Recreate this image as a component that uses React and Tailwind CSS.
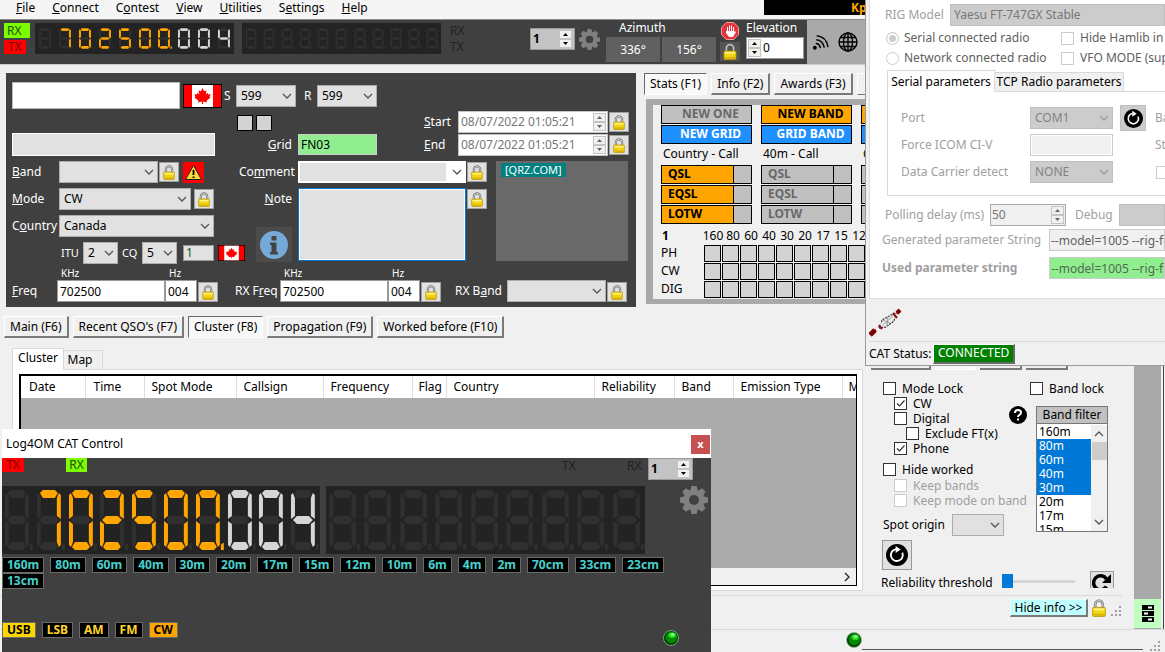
import clsx from 'clsx';

const SEGMENTS = {
  a: '6,7 9,4 21,4 24,7 21,12 9,12',
  b: '27,33 23,30 23,12 25,7 27,9',
  c: '27,35 27,59 25,61 23,56 23,38',
  d: '9,56 21,56 24,61 21,64 9,64 6,61',
  e: '3,35 7,38 7,56 5,61 3,59',
  f: '3,33 3,9 5,7 7,12 7,30',
  g: '5,34 9,30 21,30 25,34 21,38 9,38',
};

const LIT = { 0: 'abcdef', 2: 'abged', 4: 'fgbc', 5: 'afgcd', 7: 'abc', ' ': '' };

const DIGITS = [
  { char: ' ' },
  { char: '7', color: '#ffa500' },
  { char: '0', color: '#ffa500' },
  { char: '2', color: '#ffa500' },
  { char: '5', color: '#ffa500' },
  { char: '0', color: '#ffa500' },
  { char: '0', color: '#ffa500', dot: true },
  { char: '0', color: '#d6d6d6' },
  { char: '0', color: '#d6d6d6' },
  { char: '4', color: '#d6d6d6' },
];

const blanks = (count) => Array.from({ length: count }, () => ({ char: ' ' }));

const Display = ({ digits, small, className }) => (
  <div className={clsx('flex bg-[#232323]', small ? 'py-1' : '', className)}>
    {digits.map((digit, i) => (
      <svg
        key={i}
        className="h-full min-w-0 flex-1"
        viewBox={small ? '-5 0 40 68' : '0 0 32 68'}
        preserveAspectRatio="none"
      >
        {Object.keys(SEGMENTS).map((key) => (
          <polygon
            key={key}
            points={SEGMENTS[key]}
            fill={LIT[digit.char].includes(key) ? digit.color : '#303030'}
          />
        ))}
        <path d="M28 64v-5l2-2h1v7z" fill={digit.dot ? digit.color : '#303030'} />
      </svg>
    ))}
  </div>
);

const Gear = ({ className }) => (
  <svg className={className} viewBox="0 0 28 28">
    <g fill="#808080">
      {[0, 45, 90, 135].map((angle) => (
        <path key={angle} d="M11.5 0h5l1.2 5v18l-1.2 5h-5l-1.2-5V5z" transform={`rotate(${angle} 14 14)`} />
      ))}
      <circle cx="14" cy="14" r="10.5" />
    </g>
    <circle cx="14" cy="14" r="5" fill="#404040" />
  </svg>
);

const Lock = ({ className = 'h-[15px] w-3' }) => (
  <svg className={className} viewBox="0 0 14 18">
    <path d="M3.2 9V5.5a3.8 3.8 0 0 1 7.6 0V9" fill="none" stroke="#777" strokeWidth="2.6" />
    <path d="M3.2 9V5.5a3.8 3.8 0 0 1 7.6 0V9" fill="none" stroke="#c9c9c9" strokeWidth="1.2" />
    <rect x="0.6" y="8.4" width="12.8" height="9" rx="1" fill="#f2d411" stroke="#b08d00" strokeWidth="0.8" />
    <path d="M1.5 9.5h11v2h-11z" fill="#fff07a" />
    <path d="M1.5 15h11v1.6h-11z" fill="#d8ae08" />
  </svg>
);

const LockButton = () => (
  <button aria-label="Lock" className="flex h-5 w-5 shrink-0 items-center justify-center border border-[#a0a0a0] bg-[#e1e1e1]">
    <Lock />
  </button>
);

const Flag = ({ className }) => (
  <svg className={className} viewBox="0 0 39 24" preserveAspectRatio="none">
    <rect width="39" height="24" fill="#000" />
    <rect x="1" y="1" width="37" height="22" fill="#f00" />
    <rect x="9" y="1" width="21" height="22" fill="#fff" />
    <path
      transform="translate(11.5 4) scale(0.8)"
      fill="#f00"
      d="M10 0 12 4 15 3 14 8 16.500 6 17 8 20 7.500 19 11 20 12 15 16 15.500 18 10.700 17V20H9.300V17L4.500 18 5 16 0 12 1 11 0 7.500 3 8 3.500 6 6 8 5 3 8 4z"
    />
  </svg>
);

const Led = ({ className }) => (
  <svg className={className} viewBox="0 0 16 16">
    <circle cx="8" cy="8" r="7.5" fill="#003d00" stroke="#8fbf8f" strokeWidth="0.8" />
    <circle cx="8.400" cy="7.400" r="5.800" fill="#008a00" />
    <ellipse cx="9.200" cy="5.200" rx="3.600" ry="2.600" fill="#2fe22f" />
    <ellipse cx="9.600" cy="4.400" rx="1.600" ry="1" fill="#b9ffb9" />
  </svg>
);

const Reload = ({ className }) => (
  <svg className={className} viewBox="0 0 24 24">
    <circle cx="12" cy="12" r="12" fill="#000" />
    <path d="M17.800 9.500A6.500 6.500 0 1 1 11 5.600" fill="none" stroke="#fff" strokeWidth="2" />
    <path d="M10.500 2.200 16 6l-5.500 3.800z" fill="#fff" />
  </svg>
);

const Chevron = ({ className, color = '#555' }) => (
  <svg className={className} viewBox="0 0 10 6">
    <path d="M1 1l4 4 4-4" fill="none" stroke={color} strokeWidth="1.300" />
  </svg>
);

const Grip = () => (
  <svg className="h-3 w-3" viewBox="0 0 12 12" fill="#a0a0a0">
    <path d="M9 1h2v2H9zM5 5h2v2H5zM9 5h2v2H9zM1 9h2v2H1zM5 9h2v2H5zM9 9h2v2H9z" />
  </svg>
);

const Combo = ({ id, label, value, className, disabled }) => (
  <div className={clsx('relative h-[22px] shrink-0', className)}>
    <select
      id={id}
      aria-label={label}
      disabled={disabled}
      className={clsx(
        'block h-full w-full appearance-none border pl-1 pr-3',
        disabled ? 'border-[#bfbfbf] bg-[#ccc] text-[#838383]' : 'border-[#adadad] bg-[#e1e1e1] text-black'
      )}
    >
      <option>{value}</option>
    </select>
    <Chevron
      color={disabled ? '#999' : '#555'}
      className="pointer-events-none absolute right-1 top-2 h-1.5 w-2.5"
    />
  </div>
);

const Arrows = ({ dim }) => (
  <span className="flex w-[15px] flex-col justify-between p-px">
    {['Up', 'Down'].map((dir) => (
      <button
        key={dir}
        type="button"
        aria-label={dir}
        className={clsx(
          'flex h-[9px] items-center justify-center border border-[#c4c4c4] bg-[#f0f0f0]',
          dim ? 'text-[#666]' : 'text-black'
        )}
      >
        <svg className="h-[3px] w-[5px]" viewBox="0 0 5 3" fill="currentColor">
          <path d={dir === 'Up' ? 'M0 3h5L2.500 0z' : 'M0 0h5L2.500 3z'} />
        </svg>
      </button>
    ))}
  </span>
);

const RadioNumber = () => (
  <div className="flex h-[22px] w-[45px] border border-[#999] bg-[#c3c3c3]">
    <input aria-label="Radio" defaultValue="1" className="w-[27px] bg-transparent pl-0.5 font-bold text-black" />
    <Arrows />
  </div>
);

const DateBox = ({ id, children }) => (
  <div className="flex items-center pr-px">
    <label htmlFor={id} className="w-[34px]">{children}</label>
    <div className="mr-px flex h-[22px] w-[150px] items-center justify-between border border-[#c4c4c4] bg-white">
      <input id={id} defaultValue="08/07/2022 01:05:21" className="w-[130px] bg-transparent pl-0.5 text-[#777]" />
      <Arrows dim />
    </div>
    <LockButton />
  </div>
);

const FreqGroup = ({ id, children }) => (
  <div className="flex items-end">
    <label htmlFor={id} className="flex h-[22px] w-[45px] shrink-0 items-center whitespace-nowrap">{children}</label>
    <div>
      <span className="block h-[13px] pl-1 text-[10px] leading-3">KHz</span>
      <input id={id} defaultValue="702500" className="block h-[22px] w-[108px] border border-[#999] bg-white pl-0.5 text-black" />
    </div>
    <div className="mr-px">
      <span className="block h-[13px] pl-1 text-[10px] leading-3">Hz</span>
      <input aria-label="Hz" defaultValue="004" className="block h-[22px] w-8 border border-[#999] bg-white pl-0.5 text-black" />
    </div>
    <LockButton />
  </div>
);

const Check = ({ children, checked, disabled, className }) => (
  <label className={clsx('flex h-[15px] items-center gap-1.5 whitespace-nowrap', className)}>
    <span className="relative block h-[13px] w-[13px] shrink-0">
      <input
        type="checkbox"
        defaultChecked={checked}
        disabled={disabled}
        className={clsx('block h-[13px] w-[13px] appearance-none border bg-white', disabled ? 'border-[#ccc]' : 'border-[#333]')}
      />
      {checked && (
        <svg className="pointer-events-none absolute inset-0 h-[13px] w-[13px]" viewBox="0 0 13 13">
          <path d="M3 6.500 5.500 9 10.500 3.500" fill="none" stroke="#333" strokeWidth="1.200" />
        </svg>
      )}
    </span>
    {children}
  </label>
);

const PushButton = ({ children, active }) => (
  <button
    className={clsx(
      'h-[22px] whitespace-nowrap border px-[5px]',
      active
        ? 'border-b-white border-l-[#696969] border-r-white border-t-[#696969] bg-[#f8f8f8]'
        : 'border-b-2 border-r-2 border-b-[#7a7a7a] border-l-white border-r-[#7a7a7a] border-t-white bg-[#f0f0f0]'
    )}
  >
    {children}
  </button>
);

const MenuBar = () => (
  <nav className="flex h-[19px] bg-[#f5f5f5]">
    <div className="flex items-start gap-[17px] pl-4 leading-[15px]">
      <a href="#file"><u>F</u>ile</a>
      <a href="#connect"><u>C</u>onnect</a>
      <a href="#contest">C<u>o</u>ntest</a>
      <a href="#view"><u>V</u>iew</a>
      <a href="#utilities"><u>U</u>tilities</a>
      <a href="#settings">S<u>e</u>ttings</a>
      <a href="#help"><u>H</u>elp</a>
    </div>
    <div className="ml-auto h-[15px] w-[401px] bg-black pl-[87px] font-bold leading-[15px] text-[#ffa500]">Kp</div>
  </nav>
);

const Toolbar = () => (
  <div className="flex h-[46px] border-b border-t border-b-[#ccc] border-t-[#8c8c8c] bg-[#404040] pl-1 text-white">
    <div className="w-[31px] pt-[3px]">
      <div className="h-[15px] w-[26px] bg-[#7cfc00] pl-[3px] leading-[15px] text-[#235000]">RX</div>
      <div className="mt-0.5 h-[14px] w-[22px] bg-[#f00] pl-1 leading-[14px] text-[#7a0000]">TX</div>
    </div>
    <Display small digits={DIGITS} className="mt-[3px] h-[31px] w-[199px]" />
    <Display small digits={blanks(11)} className="ml-2 mt-[3px] h-[31px] w-[199px]" />
    <div className="w-[89px] pl-[9px] pt-[3px] text-[#222]">
      <div>RX</div>
      <div>TX</div>
    </div>
    <div className="pt-2"><RadioNumber /></div>
    <Gear className="ml-1 mt-[9px] h-[21px] w-[21px]" />
    <div className="ml-1.5 w-[110px]">
      <div className="pl-[13px]">Azimuth</div>
      <div className="mt-px flex gap-0.5 text-center leading-[25px]">
        <div className="h-[25px] flex-1 bg-[#606060]">336°</div>
        <div className="h-[25px] flex-1 bg-[#606060]">156°</div>
      </div>
    </div>
    <div className="ml-1 flex w-5 flex-col items-center gap-0.5 pt-0.5">
      <svg className="h-[18px] w-[18px]" viewBox="0 0 18 18">
        <path d="M5.300 0.500h7.400l4.800 4.800v7.400l-4.800 4.800H5.300L0.500 12.700V5.300z" fill="#e2343a" stroke="#f3a0a0" />
        <path d="M5 6v5l3 4h4l3-5-1-1-1 1V5h-1v4h-1V3.500h-1V9H9V3.500H8V9H7V5H6v4H5z" fill="#fff" />
      </svg>
      <button aria-label="Lock rotator" className="flex h-[19px] w-5 items-center justify-center bg-[#555]">
        <Lock className="h-[17px] w-[14px]" />
      </button>
    </div>
    <div className="w-[67px] pl-1.5">
      <label htmlFor="elevation" className="block h-[17px]">Elevation</label>
      <div className="flex h-[22px] w-[58px] border border-[#999] bg-white">
        <Arrows />
        <input id="elevation" defaultValue="0" className="w-10 pl-px text-black" />
      </div>
    </div>
    <div className="flex flex-1 items-center gap-[9px] bg-[#a9a9a9] pl-[5px]">
      <svg className="h-[18px] w-[17px]" viewBox="0 0 18 18" fill="none" stroke="#000" strokeWidth="1.600">
        <circle cx="3" cy="15" r="1.300" fill="#000" />
        <path d="M4 10.500q4 0 5 5M4.500 6.500q7 0.500 8.500 8.500M5 2.500q10.500 1 12 12" />
      </svg>
      <svg className="h-5 w-5" viewBox="0 0 20 20" fill="none" stroke="#000" strokeWidth="1.400">
        <circle cx="10" cy="10" r="9" />
        <ellipse cx="10" cy="10" rx="4.500" ry="9" />
        <path d="M10 1v18M1 10h18M2.500 5.500h15M2.500 14.500h15" />
      </svg>
    </div>
  </div>
);

const EntryPanel = () => (
  <form className="w-[630px] shrink-0 bg-[#404040] px-1.5 pt-[9px] text-white">
    <div className="flex h-[74px] justify-between">
      <div className="w-[365px]">
        <div className="flex h-[27px] items-center">
          <input aria-label="Callsign" className="h-[27px] w-[168px] border border-[#bbb] bg-white px-1 text-black" />
          <Flag className="ml-[3px] h-6 w-[39px]" />
          <label htmlFor="rst-sent" className="w-[14px] pl-0.5">S</label>
          <Combo id="rst-sent" value="599" className="w-[60px]" />
          <label htmlFor="rst-rcvd" className="ml-2 w-[13px]">R</label>
          <Combo id="rst-rcvd" value="599" className="w-[60px]" />
        </div>
        <div className="mt-1.5 flex h-4 gap-[3px] pl-[225px]">
          <span className="h-4 w-4 border border-black bg-[#d3d3d3]" />
          <span className="h-4 w-4 border border-black bg-[#d3d3d3]" />
        </div>
        <div className="mt-0.5 flex items-center">
          <input aria-label="Name" className="h-[23px] w-[203px] border border-white bg-[#e1e1e1] px-1 text-black" />
          <label htmlFor="grid" className="w-20 pr-[3px] text-right"><u>G</u>rid</label>
          <input id="grid" defaultValue="FN03" className="ml-auto h-[21px] w-[79px] border border-[#ccc] bg-[#90ee90] pl-0.5 text-black" />
        </div>
      </div>
      <div className="flex flex-col justify-end gap-px">
        <DateBox id="start"><u>S</u>tart</DateBox>
        <DateBox id="end"><u>E</u>nd</DateBox>
      </div>
    </div>

    <div className="mt-[5px] flex h-[101px]">
      <div className="flex w-[227px] flex-col gap-[5px]">
        <div className="flex items-center">
          <label htmlFor="band" className="w-[47px]"><u>B</u>and</label>
          <Combo id="band" value="" className="mr-px w-[99px]" />
          <LockButton />
          <svg className="ml-1 h-[21px] w-[21px]" viewBox="0 0 21 21">
            <rect width="21" height="21" fill="#f00" />
            <path d="M10.500 3.500 18.500 17.500H2.500z" fill="#ffd83a" stroke="#222" />
            <path d="M10.500 8v5M10.500 14.500v1.500" stroke="#000" strokeWidth="1.800" />
          </svg>
        </div>
        <div className="flex items-center">
          <label htmlFor="mode" className="w-[47px]"><u>M</u>ode</label>
          <Combo id="mode" value="CW" className="mr-[3px] w-[132px]" />
          <LockButton />
        </div>
        <div className="flex items-center">
          <label htmlFor="country" className="w-[47px]">C<u>o</u>untry</label>
          <Combo id="country" value="Canada" className="w-[155px]" />
        </div>
        <div className="flex items-center whitespace-nowrap pl-[49px]">
          <label htmlFor="itu" className="w-[22px] shrink-0 text-[11px]">ITU</label>
          <Combo id="itu" value="2" className="w-[35px]" />
          <label htmlFor="cq" className="w-6 shrink-0 pl-1 text-[11px]">CQ</label>
          <Combo id="cq" value="5" className="w-[35px]" />
          <input aria-label="Continent" defaultValue="1" className="ml-1.5 h-4 w-[31px] shrink-0 border border-[#999] bg-[#e1e1e1] pl-0.5 text-[#0a640a]" />
          <Flag className="ml-1 h-4 w-[27px] shrink-0" />
        </div>
      </div>
      <div className="flex w-[59px] flex-col pr-1.5 text-right">
        <label htmlFor="comment" className="h-[27px] leading-[22px]">Co<u>m</u>ment</label>
        <label htmlFor="note" className="h-[39px] leading-[22px]"><u>N</u>ote</label>
        <button type="button" aria-label="Info" className="flex h-[35px] w-9 shrink-0 items-center justify-center self-end bg-[#4b4b4b]">
          <svg className="h-7 w-7" viewBox="0 0 28 28">
            <circle cx="14" cy="14" r="14" fill="#75aad8" />
            <path d="M11.500 5h5v4.500h-5zM10 11.500h6.500V21H18v2.500h-8V21h1.500v-7H10z" fill="#444" />
          </svg>
        </button>
      </div>
      <div className="w-[168px]">
        <div className="relative h-[22px]">
          <input id="comment" className="block h-full w-full border-2 border-r-[20px] border-white bg-[#e1e1e1] px-1 text-black" />
          <Chevron className="absolute right-1 top-2 h-1.5 w-2.5" />
        </div>
        <textarea id="note" className="mt-[5px] block h-[73px] w-full resize-none border border-[#0078d7] bg-[#e1e1e1] p-1 text-black outline outline-1 -outline-offset-2 outline-white" />
      </div>
      <div className="flex w-[30px] flex-col gap-[7px] pl-px pt-px">
        <LockButton />
        <LockButton />
      </div>
      <div className="h-[100px] w-[132px] bg-[#696969] px-[5px] pt-px text-[11px]">
        <span className="inline-block h-[14px] bg-[#008080] px-1 leading-[14px]">[QRZ.COM]</span>
      </div>
    </div>

    <div className="mt-[5px] flex items-end">
      <FreqGroup id="freq"><span><u>F</u>req</span></FreqGroup>
      <div className="ml-[17px]"><FreqGroup id="rx-freq"><span>RX F<u>r</u>eq</span></FreqGroup></div>
      <label htmlFor="rx-band" className="ml-[14px] flex h-[22px] w-[52px] shrink-0 items-center whitespace-nowrap"><span>RX B<u>a</u>nd</span></label>
      <Combo id="rx-band" value="" className="mr-px w-[99px]" />
      <LockButton />
    </div>
  </form>
);

const StatColumn = ({ first, firstClass, second, title, names = ['QSL', 'EQSL', 'LOTW'], qslClass }) => (
  <div className="w-[91px] shrink-0 font-bold">
    <div className={clsx('h-[19px] border border-black pl-2 text-center leading-4', firstClass)}>{first}</div>
    <div className="mt-px h-[19px] border border-black bg-[#1e90ff] pl-2 text-center leading-4 text-white">{second}</div>
    <div className="h-[21px] whitespace-nowrap pl-0.5 pt-0.5 font-normal">{title}</div>
    {names.map((name, i) => (
      <div key={i} className="mb-px flex h-[19px] border border-black bg-[#c0c0c0] leading-4">
        <span className={clsx('w-[72px] border-r border-black pl-1.5', qslClass)}>{name}</span>
      </div>
    ))}
  </div>
);

const STAT_BANDS = ['160', '80', '60', '40', '30', '20', '17', '15', '12'];

const StatsPanel = () => (
  <div className="min-w-0 flex-1 overflow-hidden pl-2">
    <div className="flex gap-1">
      <PushButton active>Stats (F1)</PushButton>
      <PushButton>Info (F2)</PushButton>
      <PushButton>Awards (F3)</PushButton>
      <button aria-label="More" className="h-[22px] w-16 border border-white border-b-[#7a7a7a]" />
    </div>
    <div className="ml-0.5 mt-1 h-[205px] border-b-[5px] border-l-[7px] border-t-[6px] border-[#a9a9a9] pl-2">
      <div className="flex gap-[9px]">
        <StatColumn first="NEW ONE" firstClass="bg-[#c0c0c0] text-[#696969]" second="NEW GRID" title="Country - Call" qslClass="bg-[#ffa500]" />
        <StatColumn first="NEW BAND" firstClass="bg-[#ffa500]" second="GRID BAND" title="40m - Call" qslClass="text-[#696969]" />
        <StatColumn firstClass="bg-[#ffa500]" title="C" names={['', '', '']} />
      </div>
      <table className="mt-0.5 border-separate border-spacing-0">
        <thead>
          <tr className="h-[17px]">
            <th className="w-[43px] pl-px text-left">1</th>
            {STAT_BANDS.map((band, i) => (
              <th key={band} className="w-[18px] max-w-[18px] p-0 font-normal">
                <span className={clsx('flex justify-center', i > 0 && 'pl-1')}>{band}</span>
              </th>
            ))}
          </tr>
        </thead>
        <tbody>
          {['PH', 'CW', 'DIG'].map((mode) => (
            <tr key={mode} className="h-[18px]">
              <th className="p-0 text-left font-normal leading-4">{mode}</th>
              {STAT_BANDS.map((band) => (
                <td key={band} className="p-0">
                  <span className="block h-[17px] w-[17px] border border-black bg-[#d3d3d3]" />
                </td>
              ))}
            </tr>
          ))}
        </tbody>
      </table>
    </div>
  </div>
);

const ClusterPanel = () => (
  <div className="flex min-w-0 flex-1 flex-col">
    <div className="flex gap-1 pl-1">
      <PushButton>Main (F6)</PushButton>
      <PushButton>Recent QSO's (F7)</PushButton>
      <PushButton active>Cluster (F8)</PushButton>
      <PushButton>Propagation (F9)</PushButton>
      <PushButton>Worked before (F10)</PushButton>
    </div>
    <div className="mt-[10px] flex items-end pl-3">
      <button className="relative z-10 -mb-px h-[22px] w-[52px] border border-b-0 border-[#d9d9d9] bg-white pb-1">Cluster</button>
      <button className="h-[19px] w-[39px] border border-b-0 border-l-0 border-[#d9d9d9] bg-[#f0f0f0] pr-1.5">Map</button>
    </div>
    <div className="mb-1 ml-3 mr-[3px] flex min-h-0 flex-1 border border-[#d9d9d9] bg-white px-[5px] py-1">
      <div className="ml-px flex min-w-0 flex-1 flex-col overflow-hidden border-2 border-b border-r border-black bg-[#ababab]">
        <table className="w-full table-fixed">
          <thead>
            <tr className="h-[22px] bg-white text-left">
              <th className="w-[64px] border-r border-[#ddd] pl-2 font-normal">Date</th>
              <th className="w-[59px] border-r border-[#ddd] pl-2 font-normal">Time</th>
              <th className="w-[92px] border-r border-[#ddd] pl-[7px] font-normal">Spot Mode</th>
              <th className="w-[87px] border-r border-[#ddd] pl-[7px] font-normal">Callsign</th>
              <th className="w-[89px] border-r border-[#ddd] pl-[7px] font-normal">Frequency</th>
              <th className="w-[34px] border-r border-[#ddd] pl-[6px] font-normal">Flag</th>
              <th className="w-[148px] border-r border-[#ddd] pl-[7px] font-normal">Country</th>
              <th className="w-[80px] border-r border-[#ddd] pl-[7px] font-normal">Reliability</th>
              <th className="w-[59px] border-r border-[#ddd] pl-[7px] font-normal">Band</th>
              <th className="w-[109px] whitespace-nowrap border-r border-[#ddd] pl-[7px] font-normal">Emission Type</th>
              <th className="overflow-hidden pl-[6px] font-normal">M</th>
            </tr>
          </thead>
        </table>
        <div className="mt-auto flex h-[17px] items-center justify-end bg-[#f0f0f0] pr-1">
          <Chevron className="h-1.5 w-2.5 -rotate-90" color="#222" />
        </div>
      </div>
    </div>
  </div>
);

const FILTER_BANDS = ['160m', '80m', '60m', '40m', '30m', '20m', '17m', '15m'];
const SELECTED = ['80m', '60m', '40m', '30m'];

const FilterPanel = () => (
  <div className="flex w-[268px] shrink-0 flex-col overflow-hidden pb-[7px] pl-[5px] pt-8">
    <div className="flex gap-1">
      <button aria-label="Spots" className="h-[22px] w-[60px] border-b-2 border-r-2 border-[#7a7a7a]" />
      <button aria-label="Filters" className="h-[22px] w-[41px] border border-white bg-[#f8f8f8]" />
      <button aria-label="Alerts" className="h-[22px] w-[42px] border-b-2 border-r-2 border-[#7a7a7a]" />
      <button aria-label="Options" className="h-[22px] w-[42px] border-b-2 border-r-2 border-[#7a7a7a]" />
    </div>
    <div className="mt-[11px] flex pl-3">
      <div className="w-[126px]">
        <Check>Mode Lock</Check>
        <Check checked className="pl-[11px]">CW</Check>
        <Check className="pl-[11px]">Digital</Check>
        <Check className="pl-[23px]">Exclude FT(x)</Check>
        <Check checked className="pl-[11px]">Phone</Check>
        <Check className="mt-1.5">Hide worked</Check>
        <Check disabled className="mt-px pl-[11px] text-[#a0a0a0]">Keep bands</Check>
        <Check disabled className="pl-[11px] text-[#a0a0a0]">Keep mode on band</Check>
      </div>
      <svg className="mt-[25px] h-[18px] w-[18px]" viewBox="0 0 18 18">
        <circle cx="9" cy="9" r="9" fill="#000" />
        <path d="M6 7q0-3 3-3t3 2.500q0 1.500-1.500 2.300T9 11M9 12.500v2" fill="none" stroke="#fff" strokeWidth="2" />
      </svg>
      <div className="ml-[3px]">
        <Check>Band lock</Check>
        <div className="ml-1.5 mt-[10px] w-[72px]">
          <div className="h-[18px] border border-[#777] bg-[#c0c0c0] text-center leading-4">Band filter</div>
          <div className="flex h-[108px] overflow-hidden border border-t-0 border-[#777] bg-white pt-px">
            <ul role="listbox" aria-label="Band filter" className="w-[54px]">
              {FILTER_BANDS.map((band) => (
                <li
                  key={band}
                  role="option"
                  aria-selected={SELECTED.includes(band)}
                  className={clsx('h-[14px] pl-0.5 leading-[14px]', SELECTED.includes(band) && 'bg-[#0078d7] text-white')}
                >
                  {band}
                </li>
              ))}
            </ul>
            <div className="flex flex-1 flex-col items-center bg-[#f0f0f0] py-1.5">
              <Chevron className="h-1.5 w-2.5 rotate-180" />
              <span className="mt-[5px] h-[18px] w-[15px] bg-[#cdcdcd]" />
              <Chevron className="mt-auto h-1.5 w-2.5" />
            </div>
          </div>
        </div>
      </div>
    </div>
    <div className="-mt-[18px] flex items-center pl-3">
      <label htmlFor="origin" className="w-[69px] whitespace-nowrap">Spot origin</label>
      <Combo id="origin" value="" className="w-[52px]" />
    </div>
    <button aria-label="Refresh" className="ml-[11px] mt-1 flex h-[30px] w-[30px] shrink-0 items-center justify-center border border-[#999] bg-[#e1e1e1]">
      <Reload className="h-[22px] w-[22px]" />
    </button>
    <div className="mt-px flex h-[17px] shrink-0 overflow-hidden pl-[10px]">
      <label htmlFor="reliability" className="w-[121px] whitespace-nowrap pt-1">Reliability threshold</label>
      <input
        id="reliability"
        type="range"
        defaultValue="0"
        className="mt-[3px] h-[14px] w-[73px] appearance-none bg-[linear-gradient(#d6d6d6,#d6d6d6)] bg-[length:100%_3px] bg-center bg-no-repeat [&::-webkit-slider-thumb]:h-[14px] [&::-webkit-slider-thumb]:w-[11px] [&::-webkit-slider-thumb]:appearance-none [&::-webkit-slider-thumb]:bg-[#0078d7]"
      />
      <button aria-label="Reset" className="ml-[15px] flex h-6 w-6 items-center justify-center border border-[#999] bg-[#e1e1e1]">
        <svg className="h-[22px] w-5" viewBox="0 0 20 22">
          <path d="M14.500 14.500A7 7 0 1 1 14.500 7" fill="none" stroke="#000" strokeWidth="3.500" />
          <path d="M19 2v9h-9z" fill="#000" />
        </svg>
      </button>
    </div>
  </div>
);

const CatWindow = () => (
  <section className="absolute bottom-0 left-0.5 h-[223px] w-[709px] bg-[#404040]">
    <header className="flex h-[29px] items-center justify-between bg-white pl-1">
      <h2>Log4OM CAT Control</h2>
      <button aria-label="Close" className="mr-px mt-px h-[19px] w-[19px] bg-[#c75050] text-[11px] font-bold leading-4 text-white">x</button>
    </header>
    <div className="flex h-7 leading-[14px] text-[#222]">
      <div className="h-[14px] w-[22px] bg-[#f00] text-center text-[#7a0000]">TX</div>
      <div className="ml-[42px] h-[14px] w-[21px] bg-[#7cfc00] text-center text-[#235000]">RX</div>
      <div className="ml-auto w-[65px] pt-px">TX</div>
      <div className="w-[21px] pt-px">RX</div>
      <div className="mr-[18px]"><RadioNumber /></div>
    </div>
    <div className="flex">
      <Display digits={DIGITS} className="h-[68px] w-[318px]" />
      <Display digits={blanks(9)} className="ml-1.5 h-[68px] w-[319px]" />
      <Gear className="ml-auto mr-[3px] h-7 w-7" />
    </div>
    <div className="mt-[3px] flex h-8 flex-wrap gap-x-1.5 pr-8 font-bold text-[#48d1cc]">
      {['160m', '80m', '60m', '40m', '30m', '20m', '17m', '15m', '12m', '10m', '6m', '4m', '2m', '70cm', '33cm', '23cm', '13cm'].map((band) => (
        <button key={band} className="h-4 border border-[#696969] bg-black px-1 leading-[14px]">{band}</button>
      ))}
    </div>
    <div className="mt-[33px] flex gap-1.5 font-bold">
      {['USB', 'LSB', 'AM', 'FM', 'CW'].map((mode) => (
        <button
          key={mode}
          className={clsx(
            'h-4 border border-[#696969] px-1 leading-[14px]',
            mode === 'USB' && 'bg-[#ffd700] text-black',
            mode === 'CW' && 'bg-[#ffa500] text-black',
            mode !== 'USB' && mode !== 'CW' && 'bg-black text-[#ffd42a]'
          )}
        >
          {mode}
        </button>
      ))}
      <Led className="ml-auto mr-8 mt-2 h-4 w-4" />
    </div>
  </section>
);

const RigWindow = () => (
  <section className="absolute right-0 top-0 h-[366px] w-[300px] overflow-hidden border-b border-l border-[#9a9a9a] bg-[#f0f0f0] pl-[3px]">
    <div className="h-[299px] overflow-hidden border-b border-l border-[#dcdcdc] bg-white pt-1 text-[#a0a0a0]">
      <div className="flex items-center pl-[15px]">
        <label htmlFor="rig" className="w-[65px] whitespace-nowrap">RIG Model</label>
        <select id="rig" disabled className="h-[22px] flex-1 appearance-none border border-[#bfbfbf] bg-[#ccc] pl-[3px] text-[#777]">
          <option>Yaesu FT-747GX Stable</option>
        </select>
      </div>
      <div className="mt-0.5 grid grid-cols-[175px_1fr] pl-4 leading-5 text-[#606060]">
        {[
          ['Serial connected radio', 'Hide Hamlib in t'],
          ['Network connected radio', 'VFO MODE (sup'],
        ].map(([radio, check], i) => (
          <div key={radio} className="contents">
            <label className="flex h-5 items-center gap-[5px] whitespace-nowrap">
              <input
                type="radio"
                name="connection"
                defaultChecked={i === 0}
                className="h-[13px] w-[13px] appearance-none rounded-full border border-[#ccc] bg-white checked:bg-[#ccc] checked:shadow-[inset_0_0_0_2px_white]"
              />
              {radio}
            </label>
            <Check disabled className="self-center">{check}</Check>
          </div>
        ))}
      </div>
      <div className="mt-[2px] flex items-end pl-[17px] text-black">
        <button className="relative z-10 -mb-px h-[22px] w-[108px] whitespace-nowrap border border-b-0 border-[#d9d9d9] bg-white">Serial parameters</button>
        <button className="h-[19px] w-[129px] whitespace-nowrap border border-b-0 border-l-0 border-[#d9d9d9] bg-[#f0f0f0] leading-4">TCP Radio parameters</button>
      </div>
      <div className="ml-[17px] flex h-[105px] flex-col gap-[5px] whitespace-nowrap border border-r-0 border-[#d9d9d9] pl-[13px] pt-[15px]">
        <div className="flex h-[22px] items-center">
          <label htmlFor="port" className="w-[129px] shrink-0">Port</label>
          <Combo id="port" disabled value="COM1" className="w-[83px]" />
          <button aria-label="Reload ports" className="ml-[7px] flex h-[26px] w-[26px] shrink-0 items-center justify-center border border-[#bfbfbf] bg-[#ccc]">
            <Reload className="h-[19px] w-[19px]" />
          </button>
          <span className="ml-[9px]">Ba</span>
        </div>
        <div className="flex h-[22px] items-center">
          <label htmlFor="civ" className="w-[129px] shrink-0">Force ICOM CI-V</label>
          <input id="civ" disabled className="h-[22px] w-[83px] shrink-0 border border-[#ccc] bg-[#f0f0f0] outline outline-1 -outline-offset-2 outline-white" />
          <span className="ml-[42px]">St</span>
        </div>
        <div className="flex h-[22px] items-center">
          <label htmlFor="carrier" className="w-[129px] shrink-0">Data Carrier detect</label>
          <Combo id="carrier" disabled value="NONE" className="w-[83px]" />
          <Check disabled className="ml-[43px]" />
        </div>
      </div>
      <div className="mt-2 flex items-center pl-[15px]">
        <label htmlFor="polling" className="w-[105px] whitespace-nowrap">Polling delay (ms)</label>
        <div className="flex h-[22px] w-[76px] justify-between border border-[#aaa] bg-[#f0f0f0]">
          <input id="polling" disabled defaultValue="50" className="w-14 bg-transparent pl-px text-[#777]" />
          <Arrows dim />
        </div>
        <label htmlFor="debug" className="w-[53px] pl-[9px]">Debug</label>
        <input id="debug" disabled className="h-[22px] min-w-0 flex-1 border border-[#bfbfbf] bg-[#ccc]" />
      </div>
      <div className="mt-[3px] flex items-center pl-3">
        <label htmlFor="generated" className="w-[167px] shrink-0 whitespace-nowrap">Generated parameter String</label>
        <input id="generated" readOnly value="--model=1005 --rig-fi" className="h-[22px] min-w-0 flex-1 border border-[#ccc] bg-[#f0f0f0] pl-px text-[#606060]" />
      </div>
      <div className="mt-1.5 flex items-center pl-3">
        <label htmlFor="used" className="w-[167px] shrink-0 whitespace-nowrap font-bold">Used parameter string</label>
        <input id="used" readOnly value="--model=1005 --rig-fi" className="h-[22px] min-w-0 flex-1 border border-[#ccc] bg-[#90ee90] pl-px text-[#506a50]" />
      </div>
    </div>
    <div className="h-[43px] border-b border-[#d9d9d9] pt-[9px]">
      <svg className="h-[30px] w-[34px]" viewBox="0 0 34 30">
        <path d="M2 26 31 3" stroke="#8b1a1a" strokeWidth="2.500" />
        <path d="M11 20 13 12 22 7 27 5 25 13 17 19z" fill="#ececec" stroke="#333" strokeWidth="1.200" strokeDasharray="2 1" />
        <path d="M13 18 25 7M14 12l7 3M19 8l-1 10" stroke="#999" strokeWidth="1" />
        <path d="M7 22l3-2M11 18l2-2M25 9l3-3" stroke="#fff" strokeWidth="3" />
        <path d="M10 17l3 4M24 5l4 5" stroke="#8b1a1a" strokeWidth="2.200" />
        <path d="M1 27 6 22" stroke="#7b0000" strokeWidth="5" />
        <path d="M28 5l3-3" stroke="#7b0000" strokeWidth="4" />
      </svg>
    </div>
    <div className="flex h-6 items-center">
      <span className="w-[64px] whitespace-nowrap">CAT Status:</span>
      <span className="h-5 border border-b-2 border-r-2 border-b-[#696969] border-l-white border-r-[#696969] border-t-white bg-[#008000] px-1 text-white">CONNECTED</span>
    </div>
  </section>
);

export default function App() {
  return (
    <div className="relative flex h-screen flex-col overflow-hidden bg-[#f0f0f0] font-['Noto_Sans',sans-serif] text-[12px] leading-4 text-black">
      <MenuBar />
      <Toolbar />
      <div className="mt-2 flex h-[234px] shrink-0 pl-1.5">
        <EntryPanel />
        <StatsPanel />
      </div>
      <div className="flex min-h-0 flex-1">
        <div className="flex min-w-0 flex-1 flex-col">
          <div className="flex min-h-0 flex-1 pt-[9px]">
            <ClusterPanel />
            <FilterPanel />
          </div>
          <div className="mr-3 flex h-[34px] items-start justify-end border-t border-[#d9d9d9] pt-[3px]">
            <button className="h-[18px] w-[78px] whitespace-nowrap border border-b-2 border-r-2 border-b-[#7a7a7a] border-l-[#e8ffff] border-r-[#7a7a7a] border-t-[#e8ffff] bg-[#c0ffff] leading-4">Hide info &gt;&gt;</button>
            <Lock className="ml-1 h-[18px] w-[14px]" />
            <span className="ml-1 mt-[6px]"><Grip /></span>
          </div>
        </div>
        <div className="flex w-[27px] flex-col bg-[#a9a9a9]">
          <button aria-label="Panels" className="mb-px mt-auto flex h-[29px] items-center justify-center bg-[#c1ffc1]">
            <svg className="h-[17px] w-3" viewBox="0 0 12 17">
              <path d="M0 0h12v5H0zM0 6h12v5H0zM0 12h12v5H0z" fill="#000" />
              <path d="M6 1.500h4v2H6zM2 7.500h4v2H2zM6 13.500h4v2H6z" fill="#fff" />
            </svg>
          </button>
        </div>
        <div className="ml-0.5 w-0.5 border-l border-[#444]" />
      </div>
      <footer className="flex h-[23px] shrink-0 items-start border-t border-[#d9d9d9] pl-[846px] pr-1 pt-0.5">
        <Led className="h-4 w-4 shrink-0" />
        <span className="mr-1.5 h-[18px] flex-1 border-b border-[#555]" />
        <span className="mt-2"><Grip /></span>
      </footer>
      <CatWindow />
      <RigWindow />
    </div>
  );
}
